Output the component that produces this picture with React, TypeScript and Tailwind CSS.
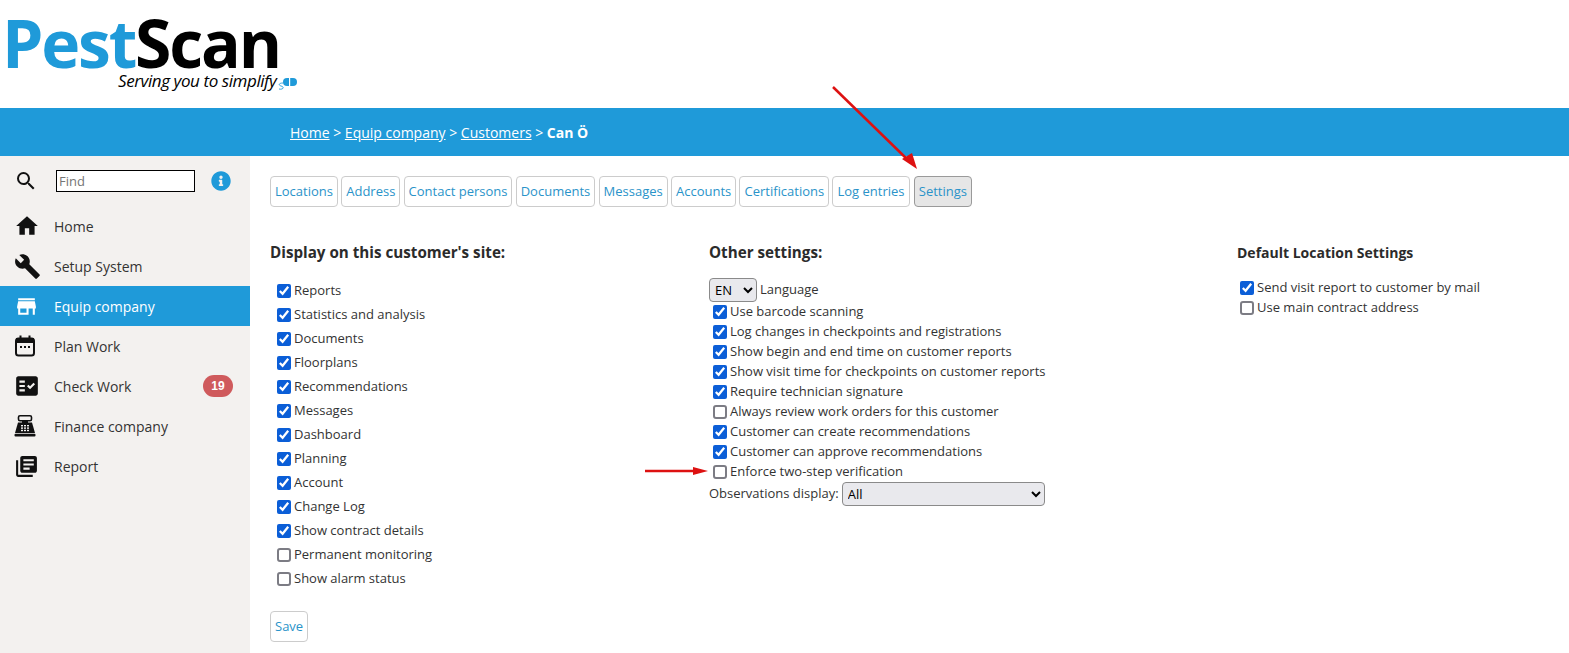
import React from "react";
import { MdSearch, MdHome, MdBuild, MdStore, MdFactCheck, MdLibraryBooks } from "react-icons/md";
import { FaInfoCircle } from "react-icons/fa";

function CalendarIcon() {
  return (
    <svg width="22" height="22" viewBox="0 0 22 22" fill="none">
      <rect x="2" y="3.5" width="18" height="17" rx="2.5" stroke="#111" strokeWidth="2" />
      <rect x="2" y="3" width="18" height="5" fill="#111" />
      <rect x="5.5" y="0.5" width="2" height="4" fill="#111" />
      <rect x="14.5" y="0.5" width="2" height="4" fill="#111" />
      <rect x="6" y="11" width="2" height="2" fill="#111" />
      <rect x="10" y="11" width="2" height="2" fill="#111" />
      <rect x="14" y="11" width="2" height="2" fill="#111" />
    </svg>
  );
}

function RegisterIcon() {
  return (
    <svg width="22" height="22" viewBox="0 0 22 22" fill="none">
      <rect x="4.5" y="0.8" width="13" height="5" rx="1.5" stroke="#111" strokeWidth="1.6" />
      <rect x="8" y="5" width="6" height="3" fill="#111" />
      <path d="M4 7.5 H18 L21 18 H1 Z" fill="#111" />
      <rect x="0.5" y="18.8" width="21" height="2.6" rx="1" fill="#111" />
      <g fill="#f3f1ef">
        <rect x="7" y="10" width="2" height="1.4" />
        <rect x="10" y="10" width="2" height="1.4" />
        <rect x="13" y="10" width="2" height="1.4" />
        <rect x="7" y="12.4" width="2" height="1.4" />
        <rect x="10" y="12.4" width="2" height="1.4" />
        <rect x="13" y="12.4" width="2" height="1.4" />
        <rect x="7" y="14.8" width="2" height="1.4" />
        <rect x="10" y="14.8" width="2" height="1.4" />
        <rect x="13" y="14.8" width="2" height="1.4" />
      </g>
    </svg>
  );
}

const nav = [
  { label: "Home", icon: <MdHome size={26} color="#111" /> },
  { label: "Setup System", icon: <MdBuild size={27} color="#111" /> },
  { label: "Equip company", icon: <MdStore size={25} color="#fff" />, active: true },
  { label: "Plan Work", icon: <CalendarIcon /> },
  { label: "Check Work", icon: <MdFactCheck size={26} color="#111" />, badge: "19" },
  { label: "Finance company", icon: <RegisterIcon /> },
  { label: "Report", icon: <MdLibraryBooks size={25} color="#111" className="-scale-x-100 rotate-180 -scale-y-100" /> },
];

const tabs = ["Locations", "Address", "Contact persons", "Documents", "Messages", "Accounts", "Certifications", "Log entries", "Settings"];

const display: [string, boolean][] = [
  ["Reports", true],
  ["Statistics and analysis", true],
  ["Documents", true],
  ["Floorplans", true],
  ["Recommendations", true],
  ["Messages", true],
  ["Dashboard", true],
  ["Planning", true],
  ["Account", true],
  ["Change Log", true],
  ["Show contract details", true],
  ["Permanent monitoring", false],
  ["Show alarm status", false],
];

const other: [string, boolean][] = [
  ["Use barcode scanning", true],
  ["Log changes in checkpoints and registrations", true],
  ["Show begin and end time on customer reports", true],
  ["Show visit time for checkpoints on customer reports", true],
  ["Require technician signature", true],
  ["Always review work orders for this customer", false],
  ["Customer can create recommendations", true],
  ["Customer can approve recommendations", true],
  ["Enforce two-step verification", false],
];

function Check({ label, checked, h }: { label: string; checked: boolean; h: string }) {
  return (
    <label className={`flex items-center ${h} text-[13px] text-[#333]`}>
      <input
        type="checkbox"
        defaultChecked={checked}
        className={
          checked
            ? "w-[14px] h-[14px] m-0 mr-[3px] accent-[#0b5ed7]"
            : "appearance-none w-[14px] h-[14px] m-0 mr-[3px] bg-white border-2 border-[#7c7c84] rounded-[3px]"
        }
      />
      {label}
    </label>
  );
}

export default function App() {
  return (
    <div className="relative w-[1569px] h-[653px] overflow-hidden bg-white font-['Open_Sans',sans-serif] text-[#333]">
      <header className="h-[108px] bg-white relative">
        <div className="absolute left-[2px] top-[9px] font-['Open_Sans'] font-bold text-[66px] leading-[66px] tracking-[-2.2px] whitespace-nowrap">
          <span className="text-[#1f9ad9]">Pest</span>
          <span className="text-black">Scan</span>
        </div>
        <div className="absolute left-[118px] top-[70px] italic text-[17px] leading-[22px] tracking-[-0.42px] text-black whitespace-nowrap">
          Serving you to simplify
        </div>
        <svg className="absolute left-[277px] top-[76px]" width="22" height="15" viewBox="0 0 22 15" fill="none">
          <rect x="6" y="2" width="14" height="8" rx="4" fill="#1f9ad9" />
          <rect x="12" y="2" width="1.2" height="8" fill="#fff" />
          <path d="M6 7 C2 7 1 9 4 10 C8 11 6 14 2 13" stroke="#1f9ad9" strokeWidth="0.9" />
        </svg>
      </header>

      <div className="h-[48px] bg-[#1f9ad9] pl-[290px] flex items-center text-white text-[14px] pt-[1px]">
        <span className="underline">Home</span>
        <span>&nbsp;&gt;&nbsp;</span>
        <span className="underline">Equip company</span>
        <span>&nbsp;&gt;&nbsp;</span>
        <span className="underline">Customers</span>
        <span>&nbsp;&gt;&nbsp;</span>
        <span className="font-bold">Can Ö</span>
      </div>

      <div className="flex h-[497px]">
        <aside className="w-[250px] shrink-0 bg-[#f3f1ef]">
          <div className="h-[50px] flex items-center pl-[14px]">
            <MdSearch size={24} color="#111" />
            <input
              placeholder="Find"
              className="ml-[18px] w-[139px] h-[22px] bg-white border border-black px-[2px] text-[13px] outline-none placeholder:text-[#757575]"
            />
            <FaInfoCircle size={20} color="#1f9ad9" className="ml-[16px]" />
          </div>
          <nav>
            {nav.map((n) => (
              <div
                key={n.label}
                className={`h-[40px] flex items-center text-[14px] ${n.active ? "bg-[#1f9ad9] text-white" : "text-[#333]"}`}
              >
                <span className="w-[54px] pl-[14px] flex items-center shrink-0">{n.icon}</span>
                <span>{n.label}</span>
                {n.badge && (
                  <span className="ml-auto mr-[17px] w-[30px] h-[22px] rounded-[11px] bg-[#cf5a5c] text-white text-[12px] font-bold font-['Liberation_Sans'] flex items-center justify-center">
                    {n.badge}
                  </span>
                )}
              </div>
            ))}
          </nav>
        </aside>

        <main className="flex-1 pl-[20px]">
          <div className="flex gap-[3.25px] pt-[20px]">
            {tabs.map((t) => (
              <button
                key={t}
                className={`h-[31px] px-[4px] rounded-[4px] border text-[13px] text-[#2a93c9] ${
                  t === "Settings" ? "bg-[#e6e6e6] border-[#9a9a9a] ml-[1px]" : "bg-white border-[#ccc]"
                }`}
              >
                {t}
              </button>
            ))}
          </div>

          <div className="flex mt-[33px]">
            <section className="w-[439px]">
              <h3 className="text-[15.2px] font-bold leading-[24px] text-[#2b2b2b]">Display on this customer's site:</h3>
              <div className="mt-[15px] pl-[7px]">
                {display.map(([l, c]) => (
                  <Check key={l} label={l} checked={c} h="h-[24px]" />
                ))}
              </div>
              <button className="mt-[20px] h-[31px] px-[4px] rounded-[4px] border border-[#ccc] bg-white text-[13px] text-[#2a93c9]">
                Save
              </button>
            </section>

            <section className="w-[527px]">
              <h3 className="text-[15.2px] font-bold leading-[24px] text-[#2b2b2b]">Other settings:</h3>
              <div className="mt-[14px] flex items-center h-[24px] text-[13px]">
                <select className="w-[48px] h-[24px] rounded-[4px] border border-[#8a8a8a] bg-[#e9e9ed] text-[13px] text-black pl-[1px]">
                  <option>EN</option>
                </select>
                <span className="ml-[3px]">Language</span>
              </div>
              <div className="pl-[4px]">
                {other.map(([l, c]) => (
                  <Check key={l} label={l} checked={c} h="h-[20px]" />
                ))}
              </div>
              <div className="flex items-center h-[24px] text-[13px]">
                <span>Observations display:</span>
                <select className="ml-[3px] w-[203px] h-[24px] rounded-[4px] border border-[#8a8a8a] bg-[#e9e9ed] text-[13px] text-black pl-[1px]">
                  <option>All</option>
                </select>
              </div>
            </section>

            <section className="pt-[1px] ml-[1px]">
              <h3 className="text-[14px] font-bold leading-[24px] text-[#2b2b2b]">Default Location Settings</h3>
              <div className="mt-[13px] pl-[3px]">
                <Check label="Send visit report to customer by mail" checked h="h-[20px]" />
                <Check label="Use main contract address" checked={false} h="h-[20px]" />
              </div>
            </section>
          </div>
        </main>
      </div>

      <svg className="absolute left-[825px] top-[80px] pointer-events-none" width="100" height="95" viewBox="0 0 100 95">
        <line x1="8" y1="7" x2="84" y2="81" stroke="#dd1111" strokeWidth="2.5" />
        <polygon points="77,79 87,73 92,89" fill="#dd1111" />
      </svg>
      <svg className="absolute left-[640px] top-[462px] pointer-events-none" width="72" height="18" viewBox="0 0 72 18">
        <line x1="5" y1="9" x2="56" y2="9" stroke="#dd1111" strokeWidth="2.5" />
        <polygon points="53,5 68,9 53,13" fill="#dd1111" />
      </svg>
    </div>
  );
}
